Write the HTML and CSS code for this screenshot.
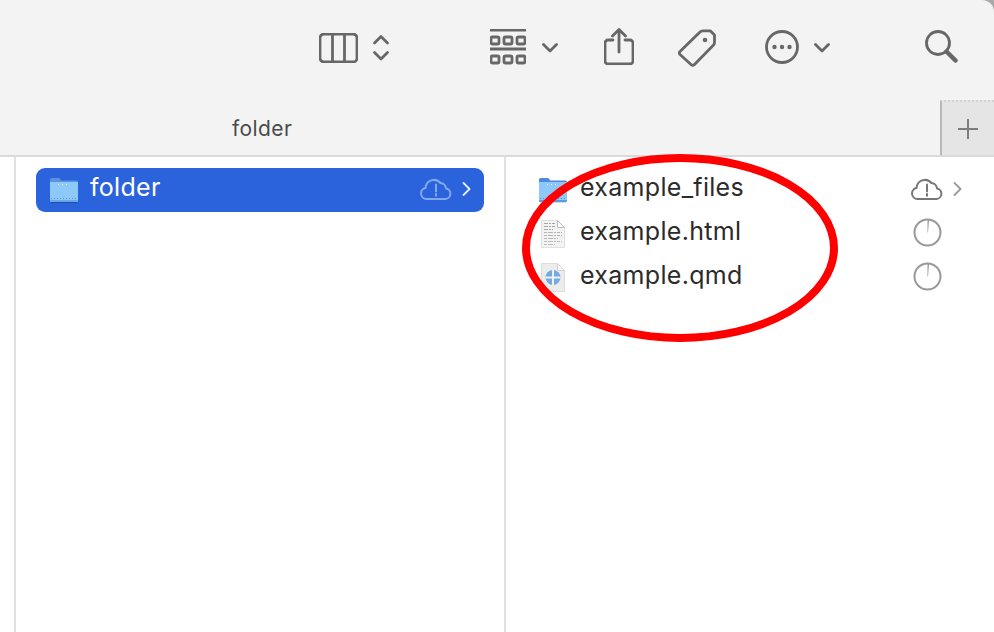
FILE: index.html
```html
<!DOCTYPE html>
<html lang="en">
<head>
  <meta charset="UTF-8" />
  <meta name="viewport" content="width=device-width, initial-scale=1.0"/>
  <title>folder</title>
  <link rel="stylesheet" href="styles.css">
</head>
<body>
  <div class="window">
    <div class="toolbar">
      <svg class="tool view-icon" width="39" height="30" viewBox="0 0 39 30">
        <rect x="1" y="1" width="37" height="28" rx="4"/>
        <path d="M13.5 1v28M25.5 1v28"/>
      </svg>
      <svg class="tool updown-icon" width="18" height="28" viewBox="0 0 18 28">
        <path d="M2.5 9 9 2.500 15.500 9M2.500 18.500 9 25l6.500-6.500"/>
      </svg>
      <svg class="tool group-icon" width="36" height="36" viewBox="0 0 36 36">
        <path d="M0 1h36M0 20h36"/>
        <rect x="1" y="8" width="8" height="7" rx="1.500"/>
        <rect x="14" y="8" width="8" height="7" rx="1.500"/>
        <rect x="27" y="8" width="8" height="7" rx="1.500"/>
        <rect x="1" y="27" width="8" height="7" rx="1.500"/>
        <rect x="14" y="27" width="8" height="7" rx="1.500"/>
        <rect x="27" y="27" width="8" height="7" rx="1.500"/>
      </svg>
      <svg class="tool chevron-icon" width="16" height="10" viewBox="0 0 16 10">
        <path d="M1.500 1.500 8 8l6.500-6.500"/>
      </svg>
      <svg class="tool share-icon" width="30" height="37" viewBox="0 0 30 37">
        <path d="M9 12H4a3 3 0 0 0-3 3v18a3 3 0 0 0 3 3h22a3 3 0 0 0 3-3V15a3 3 0 0 0-3-3h-5"/>
        <path d="M15 24V2M8.500 8 15 1.500 21.500 8"/>
      </svg>
      <svg class="tool tag-icon" width="38" height="38" viewBox="0 0 38 38">
        <path d="M2 22.500 22 3a4 4 0 0 1 2.800-1.200h7.400L36.500 6v7.500a4 4 0 0 1-1.200 2.800L16.500 35.500a2.500 2.500 0 0 1-3.500 0L2 25.500a2 2 0 0 1 0-3Z"/>
        <circle class="solid" cx="27" cy="11" r="2.300"/>
      </svg>
      <svg class="tool more-icon" width="34" height="34" viewBox="0 0 34 34">
        <circle cx="17" cy="17" r="15.500"/>
        <circle class="solid" cx="9.500" cy="17" r="2.200"/>
        <circle class="solid" cx="17" cy="17" r="2.200"/>
        <circle class="solid" cx="24.500" cy="17" r="2.200"/>
      </svg>
      <svg class="tool chevron-icon more-chevron" width="16" height="10" viewBox="0 0 16 10">
        <path d="M1.500 1.500 8 8l6.500-6.500"/>
      </svg>
      <svg class="tool search-icon" width="33" height="33" viewBox="0 0 33 33">
        <circle cx="13" cy="13" r="11.500"/>
        <path class="thick" d="M21.500 21.500 30.500 30.500"/>
      </svg>
    </div>

    <div class="tabbar">
      <span class="tab-title">folder</span>
      <div class="tab-add">
        <svg width="22" height="22" viewBox="0 0 22 22"><path d="M11 1v20M1 11h20"/></svg>
      </div>
    </div>

    <div class="browser">
      <div class="column-strip"></div>

      <div class="column sidebar-column">
        <div class="row selected">
          <svg class="file-icon" width="30" height="28" viewBox="0 0 30 28">
            <path fill="#5b93dc" d="M1 3.500A1.500 1.500 0 0 1 2.500 2h7.800l2 2.500H27.500A1.500 1.500 0 0 1 29 6V12H1Z"/>
            <path fill="#8cc8f8" d="M1 6h28v18.500a1.500 1.500 0 0 1-1.500 1.500h-25A1.500 1.500 0 0 1 1 24.500Z"/>
            <path fill="#6ea6e6" d="M1 24h28v.5a1.500 1.500 0 0 1-1.500 1.500h-25A1.500 1.500 0 0 1 1 24.500Z"/>
            <path stroke="#eaf4ff" stroke-dasharray="1 3" d="M9 8.500h12"/>
            <path stroke="#5b93dc" stroke-dasharray="1 2" d="M2 22.500h26"/>
            <path fill="#1f4fa8" d="M2 26h26v1H2Z"/>
          </svg>
          <span class="row-name">folder</span>
          <svg class="cloud-icon light" width="32" height="22" viewBox="0 0 32 22">
            <path d="M8 21H6.500a5.500 5.500 0 0 1-1-10.900A8.500 8.500 0 0 1 20.500 5 6 6 0 0 1 26 10.500 5.300 5.300 0 0 1 25.500 21Z"/>
            <path d="M16 6.500v7M16 16v1.800"/>
          </svg>
          <svg class="row-chevron light" width="9" height="14" viewBox="0 0 9 14"><path d="M1.500 1 7.500 7l-6 6"/></svg>
        </div>
      </div>

      <div class="column files-column">
        <div class="row">
          <svg class="file-icon" width="30" height="28" viewBox="0 0 30 28">
            <path fill="#4d8ae0" d="M1 3.500A1.500 1.500 0 0 1 2.500 2h7.800l2 2.500H27.500A1.500 1.500 0 0 1 29 6V12H1Z"/>
            <path fill="#8cc8f8" d="M1 6h28v18.500a1.500 1.500 0 0 1-1.500 1.500h-25A1.500 1.500 0 0 1 1 24.500Z"/>
            <path fill="#5b9ae4" d="M1 24h28v.5a1.500 1.500 0 0 1-1.500 1.500h-25A1.500 1.500 0 0 1 1 24.500Z"/>
            <path stroke="#eaf4ff" stroke-dasharray="1 3" d="M9 8.500h12"/>
            <path stroke="#5b93dc" stroke-dasharray="1 2" d="M2 22.500h26"/>
            <path fill="#d8d8d8" d="M2 26h26v1H2Z"/>
          </svg>
          <span class="row-name">example_files</span>
          <svg class="cloud-icon" width="32" height="22" viewBox="0 0 32 22">
            <path d="M8 21H6.500a5.500 5.500 0 0 1-1-10.900A8.500 8.500 0 0 1 20.500 5 6 6 0 0 1 26 10.500 5.300 5.300 0 0 1 25.500 21Z"/>
            <path d="M16 6.500v7M16 16v1.800"/>
          </svg>
          <svg class="row-chevron" width="9" height="14" viewBox="0 0 9 14"><path d="M1.500 1 7.500 7l-6 6"/></svg>
        </div>
        <div class="row">
          <svg class="file-icon" width="30" height="30" viewBox="0 0 30 30">
            <path fill="#f3f3f3" stroke="#e0e0e0" d="M3.500 1.500h16l7 7v20h-23Z"/>
            <path fill="#fff" stroke="#bcbcbc" d="M19.500 1.500v7h7Z"/>
            <path stroke="#a8a8a8" stroke-dasharray="4 1 2 1" d="M6 4.500h11M6 7.500h11M6 10.500h9"/>
            <path stroke="#b4b4b4" stroke-dasharray="3 1 5 1 2 1" d="M6 13.500h18M6 16.500h18M6 19.500h14"/>
            <path stroke="#bcbcbc" stroke-dasharray="3 1 5 1 2 1" d="M6 22.500h18M6 25.500h11"/>
          </svg>
          <span class="row-name">example.html</span>
          <svg class="progress-icon" width="29" height="29" viewBox="0 0 29 29">
            <circle cx="14.500" cy="14.500" r="13"/>
            <path class="wedge" d="M14.500 1.500h1.600l-1.100 13h-.5Z"/>
          </svg>
        </div>
        <div class="row">
          <svg class="file-icon" width="30" height="30" viewBox="0 0 30 30">
            <path fill="#ececec" stroke="#dcdcdc" d="M3.500.5h16l7 7v21h-23Z"/>
            <path fill="#fafafa" stroke="#d4d4d4" d="M19.500.5v7h7Z"/>
            <circle cx="15" cy="14.500" r="7.500" fill="#74a9e2"/>
            <path stroke="#f1f1f1" stroke-width="2" d="M15 7v15M7.500 14.500h15"/>
          </svg>
          <span class="row-name">example.qmd</span>
          <svg class="progress-icon" width="29" height="29" viewBox="0 0 29 29">
            <circle cx="14.500" cy="14.500" r="13"/>
            <path class="wedge" d="M14.500 1.500h1.600l-1.100 13h-.5Z"/>
          </svg>
        </div>
      </div>
    </div>

    <!-- red marker drawn over the file list -->
    <svg class="annotation" width="324" height="196" viewBox="0 0 324 196">
      <ellipse cx="162" cy="98" rx="154" ry="90"/>
    </svg>
  </div>
</body>
</html>
```

FILE: styles.css
```css
* {
  box-sizing: border-box;
}

html, body {
  margin: 0;
  height: 100%;
  overflow: hidden;
  background: #fff;
  font-family: Inter, 'Liberation Sans', sans-serif;
}

.window {
  position: relative;
  display: flex;
  flex-direction: column;
  width: 994px;
  height: 632px;
  background: #a9a9a9;
}

svg {
  display: block;
  flex: none;
}

.toolbar {
  display: flex;
  align-items: flex-start;
  height: 100px;
  padding-left: 319px;
  background: #f3f3f3;
  border-top-right-radius: 12px;
}

.tool {
  fill: none;
  stroke: #676767;
  stroke-width: 2.800;
  stroke-linecap: round;
  stroke-linejoin: round;
}

.tool .solid {
  fill: #676767;
  stroke: none;
}

.tool .thick {
  stroke-width: 4.500;
}

.view-icon { margin-top: 33px; }
.updown-icon { margin: 34px 0 0 14px; }
.group-icon { margin: 29px 0 0 100px; }
.chevron-icon { margin: 43px 0 0 16px; }
.share-icon { margin: 28px 0 0 46px; }
.tag-icon { margin: 29px 0 0 44px; }
.more-icon { margin: 30px 0 0 49px; }
.more-chevron { margin-left: 15px; }
.search-icon { margin: 30px 0 0 95px; }

.tabbar {
  display: flex;
  justify-content: space-between;
  height: 57px;
  padding-left: 232px;
  background: #f3f3f3;
  border-bottom: 2px solid #dadada;
}

.tab-title {
  margin-top: 17px;
  font-size: 21px;
  line-height: 24px;
  letter-spacing: 0.4px;
  color: #4a4a4a;
}

.tab-add {
  display: flex;
  align-items: center;
  justify-content: center;
  width: 54px;
  padding-right: 1px;
  background: #e5e5e5;
  border-left: 2px solid #b8b8b8;
  border-top: 2px dotted #d2d2d2;
}

.tab-add svg {
  fill: none;
  stroke: #7d7d7d;
  stroke-width: 2;
}

.browser {
  display: flex;
  flex: 1;
  background: #fff;
}

.column-strip {
  width: 16px;
  border-right: 2px solid #e0e0e0;
}

.column {
  padding-top: 11px;
}

.sidebar-column {
  width: 490px;
  padding-left: 20px;
  padding-right: 20px;
  border-right: 2px solid #e0e0e0;
}

.files-column {
  flex: 1;
  padding-left: 32px;
  padding-right: 32px;
}

.row {
  display: flex;
  align-items: center;
  height: 44px;
  color: #2b2b2b;
}

.row-name {
  flex: 1;
  margin: 0 0 6px 12px;
  font-size: 25px;
  line-height: 30px;
  letter-spacing: 0.3px;
}

.selected {
  padding: 0 13px;
  background: #2b63dd;
  border-radius: 9px;
  color: #fff;
}

.selected .row-name {
  margin-left: 11px;
}

.file-icon {
  fill: none;
}

.cloud-icon {
  margin-bottom: 3px;
  fill: none;
  stroke: #777;
  stroke-width: 2;
  stroke-linecap: round;
  stroke-linejoin: round;
}

.cloud-icon.light {
  stroke: #83a8ec;
}

.row-chevron {
  margin: 0 0 2px 10px;
  fill: none;
  stroke: #9a9a9a;
  stroke-width: 1.800;
  stroke-linecap: round;
  stroke-linejoin: round;
}

.row-chevron.light {
  stroke: #e6edfb;
}

.progress-icon {
  margin: 0 20px 3px 0;
  fill: none;
  stroke: #999;
  stroke-width: 2;
}

.progress-icon .wedge {
  fill: #999;
  stroke: none;
}

.annotation {
  position: absolute;
  left: 518px;
  top: 150px;
  fill: none;
  stroke: #fe0000;
  stroke-width: 8;
}
```
